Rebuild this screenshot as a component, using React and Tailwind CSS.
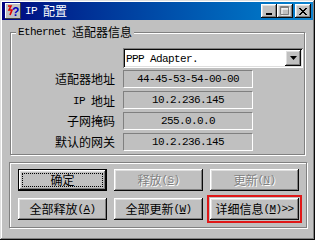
import React from "react";

const raised =
  "shadow-[inset_-1px_-1px_#0a0a0a,inset_1px_1px_#ffffff,inset_-2px_-2px_#808080,inset_2px_2px_#dfdfdf]";

// Latin text in the half-width bitmap look
const M = ({ children }) => (
  <span className="font-['Liberation_Mono',monospace] text-[11px] tracking-[-0.6px]">
    {children}
  </span>
);

const Btn = ({ children, disabled, isDefault }) => (
  <button
    className={`relative h-[22px] w-[89px] bg-[#c0c0c0] flex items-center justify-center leading-none ${raised} ${
      isDefault ? "border border-black" : ""
    } ${disabled ? "text-[#808080] [text-shadow:1px_1px_#ffffff]" : "text-black"}`}
  >
    {isDefault && (
      <span className="absolute inset-[3px] border border-dotted border-black"></span>
    )}
    {children}
  </button>
);

const Field = ({ label, value }) => (
  <div className="flex items-center">
    <div className="w-[104px] text-right leading-none">{label}</div>
    <div className="ml-[8px] w-[130px] h-[18px] flex items-center justify-center border border-t-[#808080] border-l-[#808080] border-b-white border-r-white leading-none">
      <M>{value}</M>
    </div>
  </div>
);

const TitleBtn = ({ children }) => (
  <div className={`w-[16px] h-[14px] bg-[#c0c0c0] flex items-center justify-center ${raised}`}>
    {children}
  </div>
);

export default function App() {
  return (
    <div className="w-[315px] h-[240px] bg-[#c0c0c0] p-[2px] shadow-[inset_-1px_-1px_#0a0a0a,inset_1px_1px_#dfdfdf,inset_-2px_-2px_#808080,inset_2px_2px_#ffffff] font-['Noto_Sans_CJK_SC','Noto_Sans',sans-serif] text-[12px] text-black overflow-hidden">
      {/* Title bar */}
      <div className="h-[18px] flex items-center bg-gradient-to-r from-[#000080] to-[#1084d0] pl-[3px] pr-[2px]">
        <svg width="16" height="16" viewBox="0 0 16 16">
          <rect x="0" y="0" width="16" height="16" fill="#c0c0c0" />
          <path d="M0 0H15V1H1V15H0Z" fill="#ffffff" />
          <path d="M15 0H16V16H0V15H15Z" fill="#404040" />
          <path d="M3 3L6 3L4 7L7 7L5 12" stroke="#e00000" strokeWidth="1.6" fill="none" />
          <text x="7" y="13" fontSize="12" fontWeight="bold" fill="#0000c0" fontFamily="Liberation Sans, sans-serif">
            ?
          </text>
        </svg>
        <div className="ml-[4px] text-white leading-none flex items-center">
          <M>IP</M>
          <span className="ml-[6px]">配置</span>
        </div>
        <div className="ml-auto flex items-center">
          <TitleBtn>
            <div className="w-[6px] h-[2px] bg-black mt-[6px] -ml-[1px]"></div>
          </TitleBtn>
          <TitleBtn>
            <svg width="10" height="10" viewBox="0 0 10 10">
              <path d="M1 1H9V9H1Z M1 2H9" stroke="#ffffff" fill="none" transform="translate(1 1)" />
              <path d="M0.5 0.5H8.5V8.5H0.5Z M0.5 1.5H8.5" stroke="#808080" fill="none" />
            </svg>
          </TitleBtn>
          <div className="ml-[2px]">
            <TitleBtn>
              <svg width="8" height="7" viewBox="0 0 8 7">
                <path d="M0 0L7 7M1 0L8 7M7 0L0 7M8 0L1 7" stroke="#000" strokeWidth="1" />
              </svg>
            </TitleBtn>
          </div>
        </div>
      </div>

      {/* Adapter info group */}
      <div className="relative ml-[8px] mt-[12px] w-[295px] h-[123px] border border-[#808080] shadow-[inset_1px_1px_#ffffff,1px_1px_#ffffff] pt-[15px]">
        <div className="absolute left-[5px] -top-[7px] bg-[#c0c0c0] px-[2px] leading-none flex items-center">
          <M>Ethernet</M>
          <span className="ml-[6px]">适配器信息</span>
        </div>

        <div className="ml-[112px] w-[180px] h-[20px] bg-white flex items-center shadow-[inset_1px_1px_#808080,inset_-1px_-1px_#ffffff,inset_2px_2px_#0a0a0a,inset_-2px_-2px_#dfdfdf] p-[2px]">
          <span className="pl-[1px] flex-1 leading-none">
            <M>PPP Adapter.</M>
          </span>
          <div className={`w-[16px] h-[16px] bg-[#c0c0c0] flex items-center justify-center ${raised}`}>
            <svg width="7" height="4" viewBox="0 0 7 4">
              <path d="M0 0H7L3.5 4Z" fill="#000" />
            </svg>
          </div>
        </div>

        <div className="mt-[2px] flex flex-col gap-[3px]">
          <Field label="适配器地址" value="44-45-53-54-00-00" />
          <Field
            label={
              <span className="inline-flex items-center">
                <M>IP</M>
                <span className="ml-[6px]">地址</span>
              </span>
            }
            value="10.2.236.145"
          />
          <Field label="子网掩码" value="255.0.0.0" />
          <Field label="默认的网关" value="10.2.236.145" />
        </div>
      </div>

      {/* Buttons group */}
      <div className="ml-[7px] mt-[7px] w-[298px] h-[66px] border border-[#808080] shadow-[inset_1px_1px_#ffffff,1px_1px_#ffffff] pl-[8px] pt-[6px]">
        <div className="grid grid-cols-[89px_89px_89px] gap-x-[7px] gap-y-[7px]">
          <Btn isDefault>确定</Btn>
          <Btn disabled>
            释放<M>(<u>S</u>)</M>
          </Btn>
          <Btn disabled>
            更新<M>(<u>N</u>)</M>
          </Btn>
          <Btn>
            全部释放<M>(<u>A</u>)</M>
          </Btn>
          <Btn>
            全部更新<M>(<u>W</u>)</M>
          </Btn>
          {/* red highlight box drawn around this button in the screenshot */}
          <div className="-m-[3px] p-[1px] border-2 border-solid border-[#e01818] w-[95px] h-[28px] flex items-center justify-center">
            <Btn>
              详细信息<M>(<u>M</u>)&gt;&gt;</M>
            </Btn>
          </div>
        </div>
      </div>
    </div>
  );
}
